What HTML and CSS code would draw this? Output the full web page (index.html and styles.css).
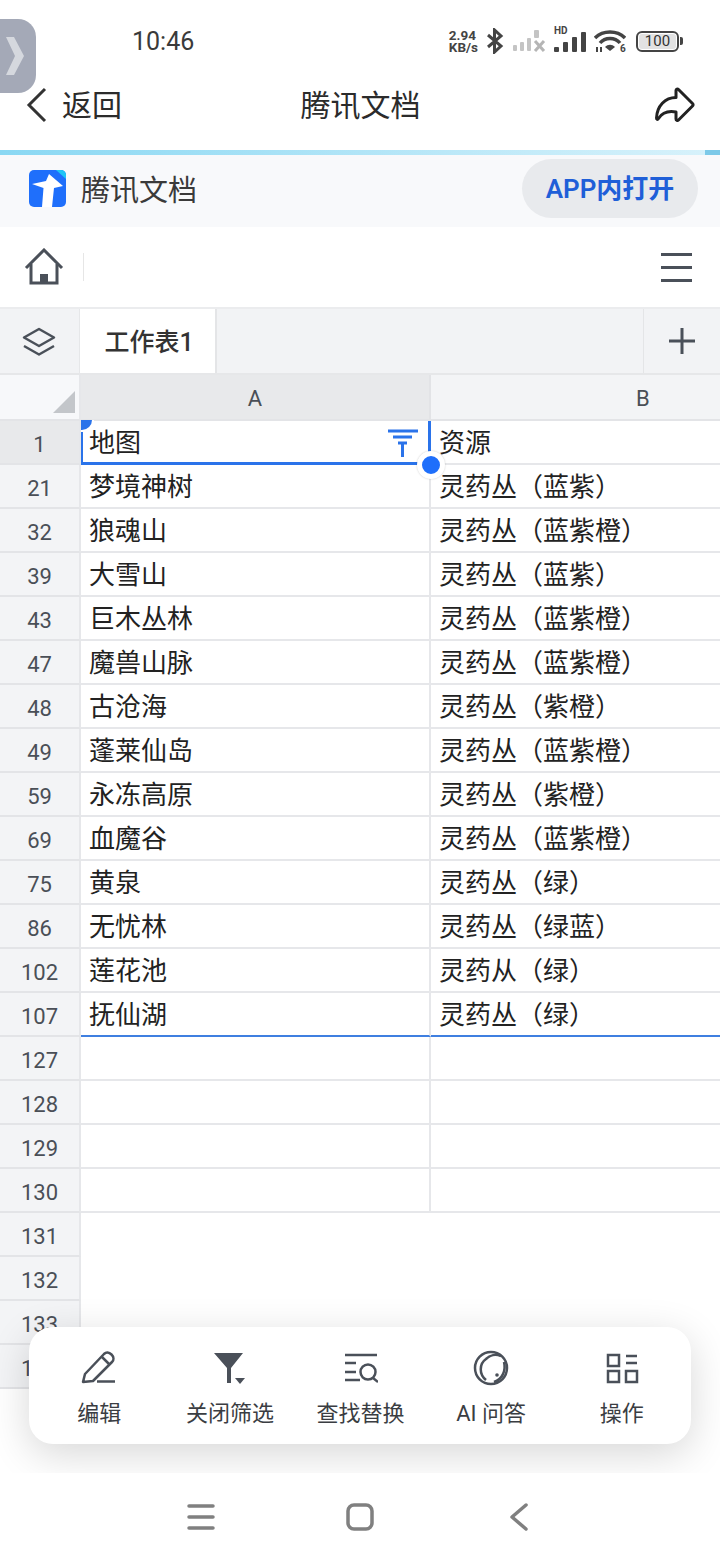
FILE: index.html
```html
<!DOCTYPE html>
<html lang="zh-CN">
<head>
    <meta charset="UTF-8">
    <title>腾讯文档</title>
    <link rel="stylesheet" href="styles.css">
</head>
<body>
<div class="side_tab">
    <svg width="22" height="38" viewBox="0 0 22 38"><path d="M2 0H10L20 19L10 38H2L11 19Z" fill="#d5d8de"/></svg>
</div>
<div class="status_bar">
    <span class="time">10:46</span>
    <div class="status_icons">
        <span class="speed">2.94<br>KB/s</span>
        <svg width="18" height="26" viewBox="0 0 18 26"><path d="M2 7L15 18L8.500 24V2L15 8L2 19" fill="none" stroke="#444" stroke-width="3"/></svg>
        <svg class="sim1" width="33" height="22" viewBox="0 0 33 22"><g fill="#c4c4c4"><rect x="0" y="15" width="4" height="6" rx="1"/><rect x="7" y="12" width="4" height="9" rx="1"/><rect x="14" y="8" width="4" height="13" rx="1"/><rect x="21" y="0" width="5" height="8" rx="1"/></g><path d="M22 11L31 21M31 11L22 21" stroke="#b5b5b5" stroke-width="3"/></svg>
        <div class="sim2">
            <span class="hd">HD</span>
            <svg width="32" height="21" viewBox="0 0 32 21"><g fill="#444"><rect x="0" y="15" width="5" height="5" rx="1"/><rect x="9" y="10" width="5" height="10" rx="1"/><rect x="18" y="5" width="5" height="15" rx="1"/><rect x="27" y="0" width="5" height="20" rx="1"/></g></svg>
        </div>
        <svg width="32" height="24" viewBox="0 0 32 24"><g fill="none" stroke="#444" stroke-width="3.500"><path d="M1 9C9 1 23 1 31 9"/><path d="M6 14C11 8 21 8 26 14"/></g><path d="M11 18C14 15 18 15 21 18L16 22Z" fill="#444"/><path d="M3 18V23M7 18V23" stroke="#444" stroke-width="2"/><text x="26" y="23" class="wifi_six">6</text></svg>
        <div class="battery"><span class="battery_level">100</span></div>
    </div>
</div>
<div class="app_bar">
    <div class="back">
        <svg width="22" height="36" viewBox="0 0 22 36"><path d="M19 2L3 18L19 34" fill="none" stroke="#333" stroke-width="3"/></svg>
        <span class="app_text">返回</span>
    </div>
    <span class="app_text">腾讯文档</span>
    <div class="app_right">
        <svg width="40" height="36" viewBox="0 0 40 36"><path d="M21 3.500C21 2 22.500 1.500 23.500 2.500L37.500 16.500C38.300 17.300 38.300 18.200 37.500 19L23.500 33C22.500 34 21 33.500 21 32V25C13 23.500 7 26 3.500 31.500C2.500 33 1.500 32.500 1.500 31C2 19 10 10.500 21 10.500Z" fill="none" stroke="#222" stroke-width="3" stroke-linejoin="round"/></svg>
    </div>
</div>
<div class="progress"><div class="progress_end"></div></div>
<div class="banner">
    <div class="brand">
        <svg width="37" height="37" viewBox="0 0 37 37"><rect width="37" height="37" rx="5" fill="#1f6ffb"/><path d="M27 0H32A5 5 0 0 1 37 5V9Z" fill="#1fc5f5"/><path d="M3 14L17 11L20 4L34 16L25 18L23 37H13L14.500 18Z" fill="#fff"/></svg>
        <span>腾讯文档</span>
    </div>
    <button class="open_btn">APP内打开</button>
</div>
<div class="doc_bar">
    <div class="doc_left">
        <svg width="40" height="38" viewBox="0 0 40 38"><g fill="none" stroke="#4a5059" stroke-width="3"><path d="M2 20L20 2L38 20"/><path d="M7 16V35H33V16"/></g><rect x="16" y="26" width="8" height="9" fill="#4a5059"/></svg>
        <div class="doc_divider"></div>
    </div>
    <div class="menu_icon"><i></i><i></i><i></i></div>
</div>
<div class="tabs">
    <div class="tab_layers">
        <svg width="34" height="29" viewBox="0 0 34 29"><g fill="none" stroke="#4a5059" stroke-width="2.500" stroke-linejoin="round"><path d="M17 2L32 10.500L17 19L2 10.500Z"/><path d="M2 19L17 27.500L32 19"/></g></svg>
    </div>
    <div class="tab_active">工作表1</div>
    <div class="tab_fill"></div>
    <div class="tab_add">
        <svg width="28" height="28" viewBox="0 0 28 28"><path d="M1 14H27M14 1V27" stroke="#4a5059" stroke-width="3"/></svg>
    </div>
</div>
<div class="main">
    <div class="sheet">
        <div class="row head_row">
            <div class="num corner"><div class="corner_mark"></div></div>
            <div class="col_a head_a">A</div>
            <div class="col_b head_b">B</div>
        </div>
        <div class="row">
            <div class="num num_on">1</div>
            <div class="col_a cell selected">地图
                <span class="handle_top"></span>
                <svg class="filter_icon" width="30" height="28" viewBox="0 0 30 28"><path d="M0 2H30M5 8H24M10 14H19M14.500 14V28" fill="none" stroke="#2a73ea" stroke-width="3"/></svg>
                <span class="handle_drag"></span>
            </div>
            <div class="col_b cell">资源</div>
        </div>
        <div class="row"><div class="num">21</div><div class="col_a cell">梦境神树</div><div class="col_b cell">灵药丛（蓝紫）</div></div>
        <div class="row"><div class="num">32</div><div class="col_a cell">狼魂山</div><div class="col_b cell">灵药丛（蓝紫橙）</div></div>
        <div class="row"><div class="num">39</div><div class="col_a cell">大雪山</div><div class="col_b cell">灵药丛（蓝紫）</div></div>
        <div class="row"><div class="num">43</div><div class="col_a cell">巨木丛林</div><div class="col_b cell">灵药丛（蓝紫橙）</div></div>
        <div class="row"><div class="num">47</div><div class="col_a cell">魔兽山脉</div><div class="col_b cell">灵药丛（蓝紫橙）</div></div>
        <div class="row"><div class="num">48</div><div class="col_a cell">古沧海</div><div class="col_b cell">灵药丛（紫橙）</div></div>
        <div class="row"><div class="num">49</div><div class="col_a cell">蓬莱仙岛</div><div class="col_b cell">灵药丛（蓝紫橙）</div></div>
        <div class="row"><div class="num">59</div><div class="col_a cell">永冻高原</div><div class="col_b cell">灵药丛（紫橙）</div></div>
        <div class="row"><div class="num">69</div><div class="col_a cell">血魔谷</div><div class="col_b cell">灵药丛（蓝紫橙）</div></div>
        <div class="row"><div class="num">75</div><div class="col_a cell">黄泉</div><div class="col_b cell">灵药丛（绿）</div></div>
        <div class="row"><div class="num">86</div><div class="col_a cell">无忧林</div><div class="col_b cell">灵药丛（绿蓝）</div></div>
        <div class="row"><div class="num">102</div><div class="col_a cell">莲花池</div><div class="col_b cell">灵药从（绿）</div></div>
        <div class="row"><div class="num">107</div><div class="col_a cell range_end">抚仙湖</div><div class="col_b cell range_end">灵药丛（绿）</div></div>
        <div class="row"><div class="num">127</div><div class="col_a cell"></div><div class="col_b cell"></div></div>
        <div class="row"><div class="num">128</div><div class="col_a cell"></div><div class="col_b cell"></div></div>
        <div class="row"><div class="num">129</div><div class="col_a cell"></div><div class="col_b cell"></div></div>
        <div class="row"><div class="num">130</div><div class="col_a cell"></div><div class="col_b cell"></div></div>
        <div class="row"><div class="num">131</div></div>
        <div class="row"><div class="num">132</div></div>
        <div class="row"><div class="num">133</div></div>
        <div class="row"><div class="num">134</div></div>
    </div>
    <div class="float_bar">
        <div class="float_item">
            <svg width="36" height="36" viewBox="0 0 36 36"><g fill="none" stroke="#4a5059" stroke-width="2.500" stroke-linejoin="round"><path d="M2 32L4 24L23 4C25 2 28 2 30.500 4.500C33 7 33 10 31 12L12 31Z"/><path d="M21 7L28 14"/></g><path d="M16 31.500H34" stroke="#4a5059" stroke-width="2.500"/></svg>
            <span>编辑</span>
        </div>
        <div class="float_item">
            <svg width="34" height="36" viewBox="0 0 34 36"><path d="M1 3H30L18 18V33H14V18Z" fill="#4a5059"/><path d="M22 28H32L27 34Z" fill="#4a5059"/></svg>
            <span>关闭筛选</span>
        </div>
        <div class="float_item">
            <svg width="36" height="36" viewBox="0 0 36 36"><g fill="none" stroke="#4a5059" stroke-width="2.500"><path d="M3 5H35M3 13H14M3 22H14M3 30H18"/><circle cx="26" cy="22" r="7.500"/><path d="M31 28L36 32"/></g></svg>
            <span>查找替换</span>
        </div>
        <div class="float_item">
            <svg width="36" height="36" viewBox="0 0 36 36"><g fill="none" stroke="#4a5059" stroke-width="2.500"><circle cx="18" cy="18" r="16"/><path d="M13 30C6 24 6 14 13 9C17 5 23 4 28 6"/><path d="M31 12C33 20 30 29 21 32"/></g><circle cx="24" cy="25" r="1.800" fill="#4a5059"/></svg>
            <span>AI 问答</span>
        </div>
        <div class="float_item">
            <svg width="34" height="36" viewBox="0 0 34 36"><g fill="none" stroke="#4a5059" stroke-width="2.500"><rect x="3" y="5" width="11" height="11"/><rect x="3" y="21" width="11" height="11"/><rect x="21" y="21" width="11" height="11"/><path d="M21 6H32M21 13H32"/></g></svg>
            <span>操作</span>
        </div>
    </div>
</div>
<div class="nav_bar">
    <svg width="28" height="26" viewBox="0 0 28 26"><path d="M2 2H26M2 13H26M2 24H26" stroke="#808080" stroke-width="3.500" stroke-linecap="round"/></svg>
    <svg width="28" height="28" viewBox="0 0 28 28"><rect x="2" y="2" width="24" height="24" rx="6" fill="none" stroke="#808080" stroke-width="3.500"/></svg>
    <svg width="18" height="28" viewBox="0 0 18 28"><path d="M16 2L2 14L16 26" fill="none" stroke="#808080" stroke-width="3.500" stroke-linecap="round" stroke-linejoin="round"/></svg>
</div>
</body>
</html>
```
FILE: styles.css
```css
*{
    padding: 0px;
    margin: 0px;
    box-sizing: border-box;
}
body{
    width: 720px;
    height: 1560px;
    overflow: hidden;
    display: flex;
    flex-direction: column;
    background: white;
    position: relative;
    font-family: "Roboto", "Noto Sans CJK SC", sans-serif;
    color: #2b2b2b;
}
.side_tab{
    position: absolute;
    left: 0;
    top: 19px;
    width: 36px;
    height: 74px;
    background: #a4a9b7;
    border-radius: 0 18px 18px 0;
    display: flex;
    align-items: center;
    padding-left: 4px;
    z-index: 5;
}
.status_bar{
    height: 75px;
    flex: none;
    display: flex;
    align-items: flex-start;
    justify-content: space-between;
    padding: 27px 41px 0 132px;
}
.time{
    font-size: 25px;
    line-height: 30px;
    color: #3a3a3a;
}
.status_icons{
    display: flex;
    align-items: center;
    gap: 8px;
    height: 30px;
    margin-top: -1px;
}
.speed{
    font-size: 13.500px;
    line-height: 12.500px;
    font-weight: 700;
    color: #444;
}
.sim1{
    margin-left: 1px;
}
.sim2{
    position: relative;
    width: 32px;
    height: 24px;
    display: flex;
    align-items: flex-end;
}
.hd{
    position: absolute;
    left: 0;
    top: -3px;
    font-size: 10px;
    line-height: 10px;
    font-weight: 700;
    color: #444;
}
.wifi_six{
    font-family: "Roboto", sans-serif;
    font-size: 10px;
    font-weight: 700;
    fill: #444;
}
.battery{
    position: relative;
    width: 43px;
    height: 21px;
    margin-left: 2px;
    border: 2px solid #444;
    border-radius: 6px;
    padding: 1px;
}
.battery:after{
    content: "";
    position: absolute;
    right: -6px;
    top: 4px;
    width: 3px;
    height: 8px;
    border-radius: 0 2px 2px 0;
    background: #444;
}
.battery_level{
    display: block;
    height: 100%;
    background: #e2e2e2;
    border-radius: 3px;
    font-size: 15px;
    line-height: 15px;
    text-align: center;
    color: #333;
}
.app_bar{
    height: 75px;
    flex: none;
    display: flex;
    align-items: center;
    justify-content: space-between;
    padding: 0 25px 15px 26px;
}
.back{
    display: flex;
    align-items: center;
    gap: 14px;
    width: 200px;
}
.app_text{
    font-size: 30px;
    margin-bottom: 4px;
}
.app_right{
    width: 200px;
    display: flex;
    justify-content: flex-end;
}
.progress{
    height: 5px;
    flex: none;
    background: linear-gradient(to right, #8ad8f3, #d8f2fb);
    display: flex;
    justify-content: flex-end;
}
.progress_end{
    width: 15px;
    background: #7cc9e8;
}
.banner{
    height: 72px;
    flex: none;
    background: #f8f9fb;
    display: flex;
    align-items: center;
    justify-content: space-between;
    padding: 0 22px 6px 29px;
}
.brand{
    display: flex;
    align-items: center;
    gap: 15px;
    font-size: 29px;
    color: #3a3a3a;
}
.open_btn{
    width: 176px;
    height: 59px;
    border: none;
    border-radius: 30px;
    background: #e8eaed;
    color: #1f5fd8;
    font-family: "Roboto", "Noto Sans CJK SC", sans-serif;
    font-size: 26px;
    font-weight: 600;
    padding-bottom: 3px;
}
.doc_bar{
    height: 82px;
    flex: none;
    display: flex;
    align-items: center;
    justify-content: space-between;
    padding: 0 28px 0 24px;
    border-bottom: 2px solid #ebecee;
}
.doc_left{
    display: flex;
    align-items: center;
    gap: 19px;
}
.doc_divider{
    width: 1px;
    height: 28px;
    background: #e6e6e6;
}
.menu_icon{
    width: 31px;
    display: flex;
    flex-direction: column;
    gap: 10px;
}
.menu_icon i{
    display: block;
    height: 3px;
    background: #4a5059;
}
.tabs{
    height: 66px;
    flex: none;
    display: flex;
    background: #f2f3f5;
    border-bottom: 2px solid #e6e7e9;
}
.tab_layers{
    width: 80px;
    display: flex;
    align-items: center;
    justify-content: center;
    padding-right: 2px;
    border-right: 1px solid #e6e7e9;
}
.tab_active{
    width: 137px;
    background: white;
    border-right: 2px solid #e4e5e7;
    font-size: 25px;
    font-weight: 500;
    color: #333;
    display: flex;
    align-items: center;
    justify-content: center;
    padding: 0 0 2px 3px;
}
.tab_fill{
    flex: 1;
}
.tab_add{
    width: 77px;
    border-left: 1px solid #e4e5e7;
    display: flex;
    align-items: center;
    justify-content: center;
}
.main{
    flex: 1;
    position: relative;
    overflow: hidden;
}
.row{
    display: flex;
    height: 44px;
}
.head_row{
    height: 46px;
}
.num{
    width: 81px;
    flex: none;
    background: #f3f4f6;
    border-right: 2px solid #e6e7ea;
    border-bottom: 2px solid #e3e4e7;
    display: flex;
    align-items: center;
    justify-content: center;
    padding-top: 4px;
    font-size: 22px;
    color: #4a4f57;
}
.num_on{
    background: #e8e9eb;
}
.corner{
    background: #f7f8fa;
    position: relative;
}
.corner_mark{
    position: absolute;
    right: 4px;
    bottom: 6px;
    width: 0;
    height: 0;
    border-left: 22px solid transparent;
    border-bottom: 22px solid #c3c6ca;
}
.col_a{
    width: 350px;
    flex: none;
}
.col_b{
    flex: 1;
}
.head_a, .head_b{
    display: flex;
    align-items: center;
    font-size: 22px;
    padding-top: 2px;
    color: #4a4f57;
    border-bottom: 2px solid #e3e4e7;
}
.head_a{
    justify-content: center;
    background: #e8e9eb;
    border-right: 2px solid #e2e3e6;
}
.head_b{
    background: #f3f4f6;
    padding-left: 205px;
}
.cell{
    font-size: 26px;
    line-height: 45px;
    padding-left: 8px;
    border-bottom: 2px solid #e6e7ea;
    color: #222;
    white-space: nowrap;
}
.col_a.cell{
    border-right: 2px solid #e6e7ea;
}
.selected{
    position: relative;
    padding-left: 6px;
    border-left: 2px solid #2a73ea;
    border-bottom: 3px solid #2a73ea;
}
.col_a.selected{
    border-right: 3px solid #2a73ea;
}
.range_end{
    border-bottom-color: #3f7fe0;
}
.col_a.range_end{
    border-right-color: #e6e7ea;
}
.filter_icon{
    position: absolute;
    right: 10px;
    top: 8px;
}
.handle_top{
    position: absolute;
    left: -2px;
    top: -1px;
    width: 11px;
    height: 10px;
    background: #2a73ea;
    border-radius: 0 0 10px 0;
    box-shadow: 1px 1px 0 1px white;
}
.handle_drag{
    position: absolute;
    right: -17px;
    bottom: -17px;
    width: 28px;
    height: 28px;
    border-radius: 50%;
    background: #1f6ffb;
    border: 5px solid white;
    box-shadow: 0 0 2px rgba(0,0,0,0.2);
    z-index: 2;
}
.float_bar{
    position: absolute;
    left: 29px;
    top: 952px;
    width: 662px;
    height: 117px;
    background: white;
    border-radius: 24px;
    box-shadow: 0 10px 40px rgba(0,0,0,0.16);
    display: flex;
    padding: 23px 4px 0 5px;
}
.float_item{
    flex: 1;
    display: flex;
    flex-direction: column;
    align-items: center;
    gap: 12px;
    font-size: 22px;
    line-height: 32px;
    color: #3a3d42;
}
.nav_bar{
    height: 87px;
    flex: none;
    background: white;
    display: grid;
    grid-template-columns: repeat(3, 159px);
    justify-content: center;
    justify-items: center;
    align-items: center;
}
```
